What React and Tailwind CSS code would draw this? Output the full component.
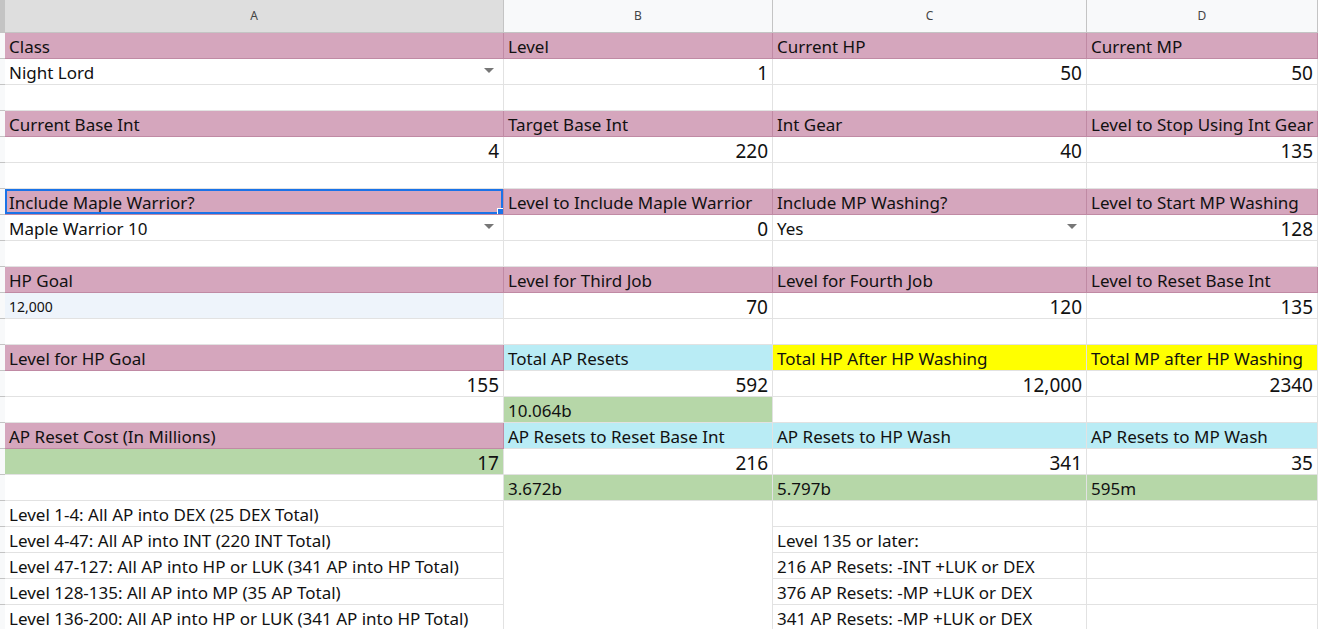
const P = "bg-[#d5a6bd]";
const C = "bg-[#b9ecf5]";
const Y = "bg-[#ffff00]";
const G = "bg-[#b6d7a8]";

const rows = [
  [["Class", P], ["Level", P], ["Current HP", P], ["Current MP", P]],
  [["Night Lord", "", "dd"], ["1", "", "n"], ["50", "", "n"], ["50", "", "n"]],
  [],
  [["Current Base Int", P], ["Target Base Int", P], ["Int Gear", P], ["Level to Stop Using Int Gear", P]],
  [["4", "", "n"], ["220", "", "n"], ["40", "", "n"], ["135", "", "n"]],
  [],
  [["Include Maple Warrior?", P, "sel"], ["Level to Include Maple Warrior", P], ["Include MP Washing?", P], ["Level to Start MP Washing", P]],
  [["Maple Warrior 10", "", "dd"], ["0", "", "n"], ["Yes", "", "dd"], ["128", "", "n"]],
  [],
  [["HP Goal", P], ["Level for Third Job", P], ["Level for Fourth Job", P], ["Level to Reset Base Int", P]],
  [["12,000", "bg-[#eef4fb]", "serif"], ["70", "", "n"], ["120", "", "n"], ["135", "", "n"]],
  [],
  [["Level for HP Goal", P], ["Total AP Resets", C], ["Total HP After HP Washing", Y], ["Total MP after HP Washing", Y]],
  [["155", "", "n"], ["592", "", "n"], ["12,000", "", "n"], ["2340", "", "n"]],
  [["", ""], ["10.064b", G], ["", ""], ["", ""]],
  [["AP Reset Cost (In Millions)", P], ["AP Resets to Reset Base Int", C], ["AP Resets to HP Wash", C], ["AP Resets to MP Wash", C]],
  [["17", G, "n"], ["216", "", "n"], ["341", "", "n"], ["35", "", "n"]],
  [["", ""], ["3.672b", G], ["5.797b", G], ["595m", G]],
  [["Level 1-4: All AP into DEX (25 DEX Total)"], ["", "", "nb"], [""], [""]],
  [["Level 4-47: All AP into INT (220 INT Total)"], ["", "", "nb"], ["Level 135 or later:"], [""]],
  [["Level 47-127: All AP into HP or LUK (341 AP into HP Total)"], ["", "", "nb"], ["216 AP Resets: -INT +LUK or DEX"], [""]],
  [["Level 128-135: All AP into MP (35 AP Total)"], ["", "", "nb"], ["376 AP Resets: -MP +LUK or DEX"], [""]],
  [["Level 136-200: All AP into HP or LUK (341 AP into HP Total)"], ["", "", "nb"], ["341 AP Resets: -MP +LUK or DEX"], [""]],
];

function Cell({ text = "", bg = "", kind = "" }) {
  const pink = bg === P;
  const border = kind === "nb" ? "border-r border-[#e2e2e2]" : pink ? "border-r border-b border-[#c08aa4]" : "border-r border-b border-[#e2e2e2]";
  return (
    <div className={`relative h-[26px] flex items-end pb-[1px] px-[4px] overflow-hidden whitespace-nowrap leading-[20px] ${bg} ${border} ${kind === "n" ? "justify-end text-[19px]" : "text-[17px]"}`}>
      {kind === "serif" ? <span className="font-['DejaVu_Serif',serif] text-[14px]">{text}</span> : <span>{text}</span>}
      {kind === "dd" && <span className="absolute right-[9px] top-[9px] w-0 h-0 border-l-[5px] border-r-[5px] border-t-[5px] border-l-transparent border-r-transparent border-t-[#777]" />}
      {kind === "sel" && (
        <>
          <span className="absolute inset-0 border-2 border-[#1a73e8]" />
          <span className="absolute right-[-1px] bottom-[-1px] w-[7px] h-[7px] bg-[#1a73e8] border border-white" />
        </>
      )}
    </div>
  );
}

export default function App() {
  return (
    <div className="w-[1318px] h-[629px] overflow-hidden bg-white text-[#111] font-['Lato','Liberation_Sans',sans-serif]">
      <div className="grid grid-cols-[5px_499px_269px_314px_231px]">
        <div className="h-[33px] bg-[#c4c4c4] border-b border-[#c4c4c4]" />
        <div className="h-[33px] bg-[#dedede] border-r border-b border-[#c4c4c4] flex items-center justify-center text-[12px] text-[#444]">A</div>
        {["B", "C", "D"].map((l) => (
          <div key={l} className="h-[33px] bg-[#f8f9fa] border-r border-b border-[#c4c4c4] flex items-center justify-center text-[12px] text-[#444]">{l}</div>
        ))}
        {rows.map((r, i) => {
          const cells = r.length ? r : [[""], [""], [""], [""]];
          return [
            <div key={"h" + i} className="h-[26px] bg-[#f8f9fa] border-b border-[#c4c4c4]" />,
            ...cells.map((c, j) => <Cell key={i + "-" + j} text={c[0]} bg={c[1] || ""} kind={c[2] || ""} />),
          ];
        })}
      </div>
    </div>
  );
}
